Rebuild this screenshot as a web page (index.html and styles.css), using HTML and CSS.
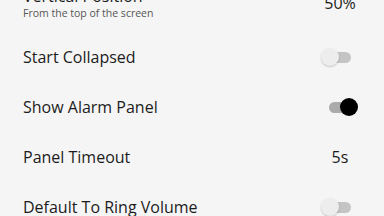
FILE: index.html
```html
<!DOCTYPE html>
<html lang="en">
<head>
  <meta charset="UTF-8">
  <meta name="viewport" content="width=device-width, initial-scale=1.0">
  <title>Panel Settings</title>
  <link rel="stylesheet" href="styles.css">
</head>
<body>
  <div class="pref-list">
    <div class="pref-row two-line">
      <div class="pref-text">
        <div class="pref-title">Vertical Position</div>
        <div class="pref-summary">From the top of the screen</div>
      </div>
      <div class="pref-widget"><span class="pref-value">50%</span></div>
    </div>

    <div class="pref-row">
      <div class="pref-text"><div class="pref-title">Start Collapsed</div></div>
      <div class="pref-widget"><span class="switch"></span></div>
    </div>

    <div class="pref-row">
      <div class="pref-text"><div class="pref-title">Show Alarm Panel</div></div>
      <div class="pref-widget"><span class="switch on"></span></div>
    </div>

    <div class="pref-row">
      <div class="pref-text"><div class="pref-title">Panel Timeout</div></div>
      <div class="pref-widget"><span class="pref-value">5s</span></div>
    </div>

    <div class="pref-row">
      <div class="pref-text"><div class="pref-title">Default To Ring Volume</div></div>
      <div class="pref-widget"><span class="switch"></span></div>
    </div>
  </div>
</body>
</html>
```

FILE: styles.css
```css
html, body {
  margin: 0;
  padding: 0;
  height: 100%;
  overflow: hidden;
}

body {
  font-family: "Open Sans", "Noto Sans", sans-serif;
  background: #f5f5f5;
  color: #1c1c1c;
}

/* list is scrolled a little, first item is half hidden */
.pref-list {
  margin-top: -26px;
}

.pref-row {
  display: flex;
  align-items: center;
  height: 50px;
  padding: 0 24px 0 23px;
}

.pref-row.two-line {
  height: 58px;
}

.pref-text {
  flex: 1;
}

.pref-title {
  font-size: 16px;
  line-height: 20px;
}

.pref-summary {
  font-size: 10.5px;
  line-height: 14px;
  color: #555;
}

.pref-widget {
  width: 40px;
  display: flex;
  justify-content: center;
}

.pref-value {
  font-size: 16px;
}

.switch {
  position: relative;
  width: 22px;
  height: 11px;
  border-radius: 6px;
  background: #c4c4c4;
}

.switch::after {
  content: "";
  position: absolute;
  top: -4px;
  left: -8px;
  width: 18px;
  height: 18px;
  border-radius: 50%;
  background: #ededed;
  box-shadow: 0 1px 2px rgba(0, 0, 0, 0.2);
}

.switch.on {
  background: #ababab;
}

.switch.on::after {
  left: 11px;
  background: #000;
  box-shadow: none;
}
```
